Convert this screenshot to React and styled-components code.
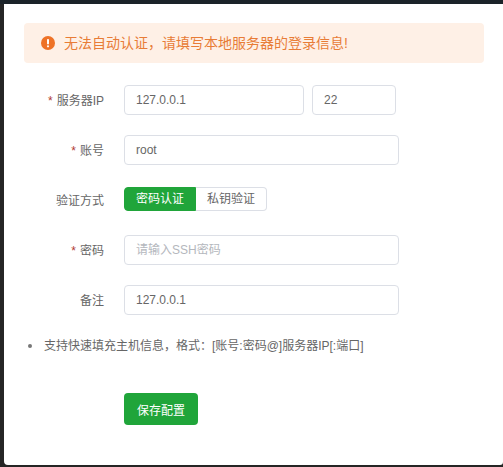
import React from 'react';
import styled, { createGlobalStyle } from 'styled-components';

const GlobalStyle = createGlobalStyle`
  html, body {
    margin: 0;
    padding: 0;
    background: #1b2329;
  }
  * {
    box-sizing: border-box;
  }
`;

const Frame = styled.div`
  width: 503px;
  height: 467px;
  padding: 0 0 2px 4px;
  border-top: 4px solid #1b2329;
  background: #252525;
  overflow: hidden;
  font-family: "Liberation Sans", "Noto Sans CJK SC", sans-serif;
`;

const Panel = styled.div`
  height: 100%;
  padding: 19px 19px 0 20px;
  background: #fff;
  border-radius: 0 0 3px 4px;
`;

const Alert = styled.div`
  display: flex;
  align-items: center;
  height: 40px;
  padding-left: 17px;
  margin-bottom: 22px;
  background: #fef0e6;
  border-radius: 4px;
  color: #e87c36;
  font-size: 14px;
`;

const AlertIcon = styled.svg`
  width: 14px;
  height: 14px;
  margin-right: 9px;
  flex: none;
`;

const AlertText = styled.span`
  margin-top: -2px;
`;

const Row = styled.div`
  display: flex;
  align-items: center;
  height: 30px;
  margin-bottom: 20px;
`;

const Label = styled.label`
  width: 80px;
  margin: -2px 20px 0 0;
  text-align: right;
  font-size: 12px;
  color: #666;
`;

const Star = styled.span`
  color: #b03a32;
  margin-right: 4px;
`;

const Input = styled.input`
  width: ${(p) => p.$width}px;
  height: 30px;
  margin-right: 8px;
  padding: 0 11px;
  border: 1px solid #dcdfe6;
  border-radius: 4px;
  outline: none;
  font-family: inherit;
  font-size: 12px;
  color: #666;

  &::placeholder {
    color: #b4b7bd;
  }
`;

const Segments = styled.div`
  display: flex;
  margin-top: -2px;
`;

const Segment = styled.div`
  width: ${(p) => (p.$active ? 72 : 71)}px;
  height: 24px;
  line-height: 22px;
  text-align: center;
  font-size: 12px;
  color: ${(p) => (p.$active ? '#fff' : '#666')};
  background: ${(p) => (p.$active ? '#20a53a' : '#fff')};
  border: 1px solid ${(p) => (p.$active ? '#20a53a' : '#dcdfe6')};
  border-left-width: ${(p) => (p.$active ? 1 : 0)}px;
  border-radius: ${(p) => (p.$active ? '4px 0 0 4px' : '0 4px 4px 0')};
`;

const Hints = styled.ul`
  margin: 0;
  padding: 2px 0 0 20px;
  list-style: none;
`;

const Hint = styled.li`
  position: relative;
  line-height: 18px;
  font-size: 12px;
  color: #666;

  &::before {
    content: '';
    position: absolute;
    left: -16px;
    top: 7px;
    width: 4px;
    height: 4px;
    border-radius: 50%;
    background: #777;
  }
`;

const Actions = styled.div`
  padding-left: 100px;
  margin-top: 38px;
`;

const SaveButton = styled.button`
  width: 74px;
  height: 32px;
  padding: 0;
  border: none;
  border-radius: 4px;
  background: #20a53a;
  color: #fff;
  font-family: inherit;
  font-size: 12px;
`;

const App = () => {
  return (
    <Frame>
      <GlobalStyle />
      <Panel>
        <Alert>
          <AlertIcon viewBox="0 0 14 14">
            <circle cx="7" cy="7" r="7" fill="#ee7226" />
            <rect x="6" y="3" width="2" height="5.4" rx="0.8" fill="#fff" />
            <circle cx="7" cy="10.3" r="1.1" fill="#fff" />
          </AlertIcon>
          <AlertText>无法自动认证，请填写本地服务器的登录信息!</AlertText>
        </Alert>
        <Row>
          <Label><Star>*</Star>服务器IP</Label>
          <Input $width={180} defaultValue="127.0.0.1" />
          <Input $width={84} defaultValue="22" />
        </Row>
        <Row>
          <Label><Star>*</Star>账号</Label>
          <Input $width={275} defaultValue="root" />
        </Row>
        <Row>
          <Label>验证方式</Label>
          <Segments>
            <Segment $active>密码认证</Segment>
            <Segment>私钥验证</Segment>
          </Segments>
        </Row>
        <Row>
          <Label><Star>*</Star>密码</Label>
          <Input $width={275} placeholder="请输入SSH密码" />
        </Row>
        <Row>
          <Label>备注</Label>
          <Input $width={275} defaultValue="127.0.0.1" />
        </Row>
        <Hints>
          <Hint>支持快速填充主机信息，格式：[账号:密码@]服务器IP[:端口]</Hint>
        </Hints>
        <Actions>
          <SaveButton>保存配置</SaveButton>
        </Actions>
      </Panel>
    </Frame>
  );
};

export default App;
